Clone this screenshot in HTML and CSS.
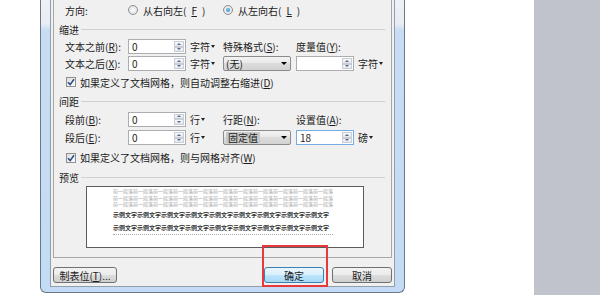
FILE: index.html
```html
<!DOCTYPE html>
<html lang="zh-CN">
  <head>
    <meta charset="UTF-8" />
    <meta name="viewport" content="width=device-width, initial-scale=1.0" />
    <title>段落</title>
    <link rel="stylesheet" href="styles.css">
  </head>
  <body>
    <div class="screen">
      <div class="gutter"></div>

      <div class="window">
        <div class="client">
          <div class="panel">
            <!-- Direction -->
            <div class="dir-row">
              <span>方向:</span>
              <span class="radio"><span class="radio-dot"></span>从右向左(<u>F</u>)</span>
              <span class="radio on"><span class="radio-dot"></span>从左向右(<u>L</u>)</span>
            </div>

            <!-- Indent -->
            <div class="group-title"><span>缩进</span></div>
            <div class="form-grid indent">
              <span>文本之前(<u>R</u>):</span>
              <div class="spin">
                <span class="spin-value">0</span>
                <span class="spin-arrows"><span class="spin-arrow up"></span><span class="spin-arrow down"></span></span>
              </div>
              <span class="unit">字符<span class="caret"></span></span>
              <span>特殊格式(<u>S</u>):</span>
              <span>度量值(<u>Y</u>):</span>
              <span></span>

              <span>文本之后(<u>X</u>):</span>
              <div class="spin">
                <span class="spin-value">0</span>
                <span class="spin-arrows"><span class="spin-arrow up"></span><span class="spin-arrow down"></span></span>
              </div>
              <span class="unit">字符<span class="caret"></span></span>
              <div class="select"><span>(无)</span><span class="caret dark"></span></div>
              <div class="spin">
                <span class="spin-value"></span>
                <span class="spin-arrows"><span class="spin-arrow up"></span><span class="spin-arrow down"></span></span>
              </div>
              <span class="unit">字符<span class="caret"></span></span>
            </div>
            <div class="check-row">
              <span class="check"><svg width="8" height="8" viewBox="0 0 8 8"><path d="M1 4.2 L3.2 6.6 L7 1.2" fill="none" stroke="#2b4f86" stroke-width="1.6"/></svg></span>
              <span>如果定义了文档网格，则自动调整右缩进(<u>D</u>)</span>
            </div>

            <!-- Spacing -->
            <div class="group-title"><span>间距</span></div>
            <div class="form-grid spacing">
              <span>段前(<u>B</u>):</span>
              <div class="spin">
                <span class="spin-value">0</span>
                <span class="spin-arrows"><span class="spin-arrow up"></span><span class="spin-arrow down"></span></span>
              </div>
              <span class="unit">行<span class="caret"></span></span>
              <span>行距(<u>N</u>):</span>
              <span>设置值(<u>A</u>):</span>
              <span></span>

              <span>段后(<u>E</u>):</span>
              <div class="spin">
                <span class="spin-value">0</span>
                <span class="spin-arrows"><span class="spin-arrow up"></span><span class="spin-arrow down"></span></span>
              </div>
              <span class="unit">行<span class="caret"></span></span>
              <div class="select"><span class="selected">固定值</span><span class="caret dark"></span></div>
              <div class="spin focused">
                <span class="spin-value">18</span>
                <span class="spin-arrows"><span class="spin-arrow up"></span><span class="spin-arrow down"></span></span>
              </div>
              <span class="unit">磅<span class="caret"></span></span>
            </div>
            <div class="check-row low">
              <span class="check"><svg width="8" height="8" viewBox="0 0 8 8"><path d="M1 4.2 L3.2 6.6 L7 1.2" fill="none" stroke="#2b4f86" stroke-width="1.6"/></svg></span>
              <span>如果定义了文档网格，则与网格对齐(<u>W</u>)</span>
            </div>

            <!-- Preview -->
            <div class="group-title"><span>预览</span></div>
            <div class="preview">
              <div class="pv-prev">前一段落前一段落前一段落前一段落前一段落前一段落前一段落前一段落前一段落前一段落前一段落</div>
              <div class="pv-prev">前一段落前一段落前一段落前一段落前一段落前一段落前一段落前一段落前一段落前一段落前一段落</div>
              <div class="pv-prev">前一段落前一段落前一段落前一段落前一段落前一段落前一段落前一段落前一段落前一段落前一段落</div>
              <div class="pv-text">示例文字示例文字示例文字示例文字示例文字示例文字示例文字示例文字示例文字</div>
              <div class="pv-text">示例文字示例文字示例文字示例文字示例文字示例文字示例文字示例文字示例文字</div>
              <div class="pv-next"></div>
            </div>
          </div>

          <div class="buttons">
            <button class="btn tabs">制表位(<u>T</u>)...</button>
            <span class="spacer"></span>
            <button class="btn default">确定</button>
            <button class="btn">取消</button>
          </div>
        </div>
      </div>

      <div class="sheet-gap"></div>
      <div class="sidebar"></div>

      <div class="highlight"></div>
    </div>
  </body>
</html>
```

FILE: styles.css
```css
/* Base */
* {
  box-sizing: border-box;
  margin: 0;
  padding: 0;
}

body {
  font-family: "Noto Sans CJK SC", "Noto Sans", sans-serif;
  font-size: 10px;
  color: #1b1b1b;
  background: #fff;
  width: 600px;
  height: 295px;
  overflow: hidden;
}

u {
  text-decoration: underline;
}

.screen {
  display: flex;
  height: 295px;
  position: relative;
}

.gutter {
  width: 40px;
  flex: none;
}

/* Window frame */
.window {
  width: 365px;
  height: 293px;
  flex: none;
  display: flex;
  border: 1px solid #6b7785;
  border-top: none;
  border-radius: 0 0 6px 6px;
  padding: 0 9px 5px;
  background: linear-gradient(
    to bottom,
    #eef1f5 0,
    #e8edf3 24px,
    #c8ddf3 30px,
    #c3dbf4 100%
  );
}

.client {
  flex: 1;
  display: flex;
  flex-direction: column;
  border: 1px solid #8e9fb1;
  border-top: none;
  background: #f0f0f0;
  padding: 0 2px 3px;
}

.panel {
  height: 258px;
  flex: none;
  border: 1px solid #a7a7a7;
  border-top: none;
}

/* Direction row */
.dir-row {
  height: 20px;
  display: grid;
  grid-template-columns: 63px 95px auto;
  align-items: center;
  padding-left: 11px;
}

.radio {
  display: flex;
  align-items: center;
  gap: 5px;
}

.radio-dot {
  width: 10px;
  height: 10px;
  border-radius: 50%;
  border: 1px solid #8e8f8f;
  background: radial-gradient(circle, #fbfbfb 0, #e4e4e4 70%, #d2d2d2 100%);
  display: flex;
  align-items: center;
  justify-content: center;
}

.radio.on .radio-dot::after {
  content: "";
  width: 4px;
  height: 4px;
  border-radius: 50%;
  background: radial-gradient(circle at 40% 40%, #7fd0f8 0, #1b6fb4 100%);
}

/* Group titles */
.group-title {
  height: 18px;
  display: flex;
  align-items: center;
  gap: 2px;
  padding: 0 6px 0 5px;
}

.group-title::after {
  content: "";
  flex: 1;
  border-top: 1px solid #d0d0d0;
  margin-top: 1px;
}

/* Form grids */
.form-grid {
  display: grid;
  grid-template-columns: 63px 58px 37px 73px 58px auto;
  align-items: center;
  padding-left: 11px;
}

.indent {
  grid-template-rows: 17px 17px;
}

.spacing {
  grid-template-rows: 18px 19px;
}

.unit {
  display: flex;
  align-items: center;
  gap: 1px;
  padding-left: 4px;
}

.caret {
  width: 0;
  height: 0;
  border-left: 2.5px solid transparent;
  border-right: 2.5px solid transparent;
  border-top: 3px solid #222;
}

.caret.dark {
  border-left-width: 3px;
  border-right-width: 3px;
  border-top: 3.5px solid #000;
}

/* Spin box */
.spin {
  height: 15px;
  display: flex;
  border: 1px solid #abadb3;
  background: #fff;
}

.spin.focused {
  border-color: #78ade3;
}

.spin-value {
  flex: 1;
  padding-left: 3px;
  line-height: 13px;
}

.spin-arrows {
  width: 11px;
  display: flex;
  flex-direction: column;
  padding: 1px 1px 1px 0;
}

.spin-arrow {
  flex: 1;
  display: flex;
  align-items: center;
  justify-content: center;
  border: 1px solid #c9ced6;
  background: linear-gradient(#f8f9fb, #e2e6ec);
}

.spin-arrow.up::before,
.spin-arrow.down::before {
  content: "";
  width: 0;
  height: 0;
  border-left: 2px solid transparent;
  border-right: 2px solid transparent;
}

.spin-arrow.up::before {
  border-bottom: 2px solid #56698c;
}

.spin-arrow.down::before {
  border-top: 2px solid #56698c;
}

/* Drop-down */
.select {
  width: 68px;
  height: 15px;
  display: flex;
  align-items: center;
  justify-content: space-between;
  padding: 0 3px 0 2px;
  border: 1px solid #8b8b8b;
  border-radius: 2px;
  background: linear-gradient(#f3f3f3, #e8e8e8 50%, #dcdcdc 50%, #d2d2d2);
}

.select .selected {
  background: #c8c8c8;
  padding: 0 2px;
  line-height: 11px;
}

/* Check rows */
.check-row {
  height: 20px;
  display: flex;
  align-items: center;
  gap: 4px;
  padding-left: 12px;
}

.check-row.low {
  height: 21px;
}

.check {
  width: 10px;
  height: 10px;
  display: flex;
  align-items: center;
  justify-content: center;
  border: 1px solid #8e8f8f;
  background: linear-gradient(135deg, #dedede, #fdfdfd);
}

/* Preview */
.preview {
  width: 278px;
  height: 62px;
  margin-left: 32px;
  border: 1px solid #5c5c5c;
  background: #fff;
  padding: 1px 0 0 26px;
}

.pv-prev,
.pv-text {
  white-space: nowrap;
}

.pv-prev {
  font-size: 5px;
  line-height: 6.5px;
  color: #a3a3a3;
}

.pv-text {
  font-size: 6px;
  line-height: 13px;
  font-weight: bold;
  color: #333;
}

.pv-next {
  width: 220px;
  border-top: 1px dotted #a8a8a8;
}

/* Buttons */
.buttons {
  display: flex;
  gap: 8px;
  margin-top: 9px;
  height: 16px;
}

.spacer {
  flex: 1;
}

.btn {
  width: 60px;
  height: 16px;
  font-family: inherit;
  font-size: 10px;
  color: #1b1b1b;
  border: 1px solid #707070;
  border-radius: 3px;
  background: linear-gradient(#f2f2f2, #ebebeb 50%, #dddddd 50%, #cfcfcf);
}

.btn.tabs {
  width: 64px;
}

.btn.default {
  border-color: #3c7fb1;
  background: linear-gradient(#eaf6fd, #d9f0fc 50%, #bee6fd 50%, #a7d9f5);
}

/* Page behind the dialog */
.sheet-gap {
  width: 129px;
  flex: none;
}

.sidebar {
  flex: 1;
  background: #c0c3cc;
}

/* Red annotation box */
.highlight {
  position: absolute;
  left: 262px;
  top: 245px;
  width: 66px;
  height: 42px;
  border: 2px solid #e8393c;
}
```
